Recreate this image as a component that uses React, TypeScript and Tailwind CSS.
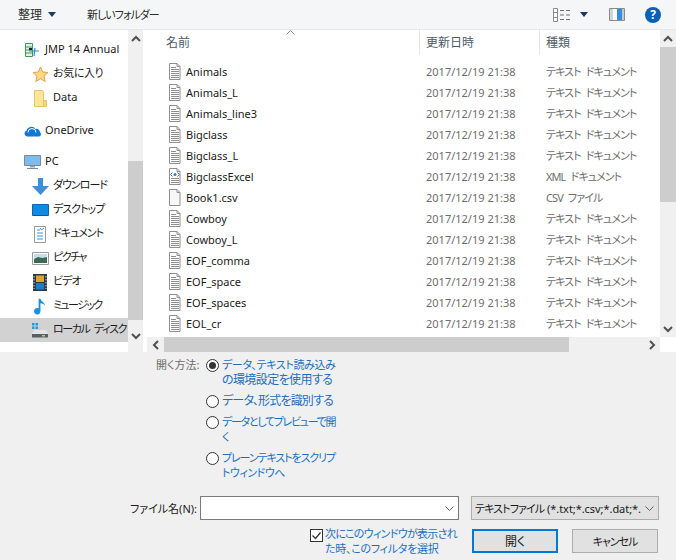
import type { ReactNode } from 'react'

const fontClass =
  "font-['Noto_Sans','Noto_Sans_CJK_JP',sans-serif] [font-feature-settings:'palt'] text-[11px] leading-[15px]"

// かな主体の文字列は幅が狭いので詰める
const kana = 'tracking-[-0.9px] [word-spacing:3px]'
const kanaNav = 'tracking-[-1px]'

const TEXT_TYPE = 'テキスト ドキュメント'

const files = [
  { name: 'Animals', type: TEXT_TYPE, icon: 'text' },
  { name: 'Animals_L', type: TEXT_TYPE, icon: 'text' },
  { name: 'Animals_line3', type: TEXT_TYPE, icon: 'text' },
  { name: 'Bigclass', type: TEXT_TYPE, icon: 'text' },
  { name: 'Bigclass_L', type: TEXT_TYPE, icon: 'text' },
  { name: 'BigclassExcel', type: 'XML ドキュメント', icon: 'xml' },
  { name: 'Book1.csv', type: 'CSV ファイル', icon: 'blank' },
  { name: 'Cowboy', type: TEXT_TYPE, icon: 'text' },
  { name: 'Cowboy_L', type: TEXT_TYPE, icon: 'text' },
  { name: 'EOF_comma', type: TEXT_TYPE, icon: 'text' },
  { name: 'EOF_space', type: TEXT_TYPE, icon: 'text' },
  { name: 'EOF_spaces', type: TEXT_TYPE, icon: 'text' },
  { name: 'EOL_cr', type: TEXT_TYPE, icon: 'text' },
]

function FileIcon({ kind }: { kind: string }) {
  return (
    <svg width="14" height="17" viewBox="0 0 14 17" className="shrink-0">
      <path d="M1.500.5h7.500l3 3v13h-10.500z" fill={kind === 'blank' ? '#f7f7f7' : '#fff'} stroke="#8e8e8e" />
      <path d="M9 .5v3h3" fill="none" stroke="#8e8e8e" />
      {kind === 'text' && (
        <path d="M3 4.500h5M3 6.500h8M3 8.500h8M3 10.500h8M3 12.500h8M3 14.500h8" stroke="#8e8e8e" />
      )}
      {kind === 'xml' && (
        <>
          <path d="M3 10.500h8M3 12.500h8M3 14.500h8" stroke="#8e8e8e" />
          <path d="M4.500 4.500l-2 2 2 2M9.500 4.500l2 2-2 2" fill="none" stroke="#5b6b7b" />
          <circle cx="7" cy="6.500" r="1.500" fill="#2f7fd0" />
        </>
      )}
    </svg>
  )
}

function Chevron({ dir, className = '' }: { dir: 'up' | 'down' | 'left' | 'right'; className?: string }) {
  const d = {
    up: 'M1 6l4-4 4 4',
    down: 'M1 2l4 4 4-4',
    left: 'M6 1L2 5l4 4',
    right: 'M2 1l4 4-4 4',
  }[dir]
  const box = dir === 'up' || dir === 'down' ? '0 0 10 8' : '0 0 8 10'
  return (
    <svg
      width={dir === 'up' || dir === 'down' ? 10 : 8}
      height={dir === 'up' || dir === 'down' ? 8 : 10}
      viewBox={box}
      className={className}
    >
      <path d={d} fill="none" stroke="#505050" strokeWidth="2" />
    </svg>
  )
}

function Caret() {
  return (
    <svg width="8" height="5" viewBox="0 0 8 5">
      <path d="M0 0h8L4 5z" fill="#1f3a5f" />
    </svg>
  )
}

function ComboArrow() {
  return (
    <svg width="9" height="5" viewBox="0 0 9 5" className="shrink-0">
      <path d="M.5.500l4 4 4-4" fill="none" stroke="#606060" />
    </svg>
  )
}

const navIcons: Record<string, ReactNode> = {
  jmp: (
    <svg width="17" height="17" viewBox="0 0 17 17">
      <path d="M1.500 1.500h7v13h-7z" fill="#e4f3e4" stroke="#3c9a4c" />
      <path d="M1.500 5h7M1.500 8h7M1.500 11h7" stroke="#3c9a4c" />
      <path d="M5 9h10M11 6l-1 8" stroke="#2b86d6" strokeWidth="1.200" />
      <rect x="5" y="6" width="3" height="2" fill="#222" />
    </svg>
  ),
  star: (
    <svg width="17" height="17" viewBox="0 0 17 17">
      <path
        d="M8.500 1l2.200 5 5.300.5-4 3.600 1.200 5.400-4.700-2.800-4.700 2.800 1.200-5.400-4-3.600 5.300-.5z"
        fill="#fbd884"
        stroke="#e8a04c"
      />
    </svg>
  ),
  folder: (
    <svg width="13" height="17" viewBox="0 0 13 17" className="ml-[2px]">
      <path d="M.5.5h8l1 1v15h-9z" fill="#fde59c" stroke="#e8c468" />
      <path d="M9.500 10.500h3v6h-3z" fill="#f7d679" stroke="#e8c468" />
    </svg>
  ),
  cloud: (
    <svg width="17" height="12" viewBox="0 0 17 12">
      <path d="M3 11.500a3 3 0 0 1-.5-5.800A5 5 0 0 1 11.500 4a3.500 3.500 0 0 1 4.500 3.200 2.400 2.400 0 0 1-1 4.300z" fill="#0f78d4" />
      <path d="M4 7.500a4 4 0 0 1 8 0" fill="none" stroke="#fff" />
    </svg>
  ),
  pc: (
    <svg width="17" height="16" viewBox="0 0 17 16">
      <path d="M.5 1.500h16v10H.5z" fill="#7fbcec" stroke="#7a8a99" />
      <path d="M6 12h5v1.500H6z" fill="#9aa5ae" />
      <path d="M3 14.500h11" stroke="#7a8a99" />
    </svg>
  ),
  download: (
    <svg width="17" height="17" viewBox="0 0 17 17">
      <path d="M6 0h5v8h6l-8.500 9L0 8h6z" fill="#3d8fdc" />
    </svg>
  ),
  desktop: (
    <svg width="17" height="14" viewBox="0 0 17 14">
      <path d="M.5 1.500h16v11H.5z" fill="#0f8be6" stroke="#1166a8" />
      <path d="M1 12h15v1H1z" fill="#0d5a98" />
    </svg>
  ),
  docs: (
    <svg width="12" height="17" viewBox="0 0 12 17" className="ml-[2px]">
      <path d="M.5.5h11v16H.5z" fill="#fff" stroke="#9a9a9a" />
      <path d="M3 4h3M3 7h6M3 10h6M3 13h6" stroke="#3c8fd8" />
      <path d="M6 2l1.500 2 2.500-2" fill="none" stroke="#3c8fd8" />
    </svg>
  ),
  pictures: (
    <svg width="17" height="13" viewBox="0 0 17 13">
      <path d="M.5.5h16v12H.5z" fill="#fff" stroke="#9a9a9a" />
      <path d="M2 2h13v5H2z" fill="#c4deee" />
      <path d="M2 7l4-2 4 1 5-1v6H2z" fill="#3d6a57" />
    </svg>
  ),
  video: (
    <svg width="14" height="17" viewBox="0 0 14 17" className="ml-[1px]">
      <path d="M0 0h14v17H0z" fill="#2c3a44" />
      <path d="M3 1.500h8v6.500H3z" fill="#e0a52f" />
      <path d="M3 9h8v6.500H3z" fill="#1f7bc9" />
      <path d="M1 2v13M13 2v13" stroke="#c8d0d6" strokeDasharray="1.500 1.500" />
    </svg>
  ),
  music: (
    <svg width="12" height="17" viewBox="0 0 13 17" className="ml-[2px]">
      <path d="M5 0h2c.5 3 5 4 5 8-1-2-3-2.500-5-3v8.500a3.500 3.500 0 1 1-2-3z" fill="#1b8fe6" />
    </svg>
  ),
  disk: (
    <svg width="16" height="15" viewBox="0 0 16 15">
      <path d="M0 0h2.500v2.500H0zM3.500 0H6v2.500H3.500zM0 3.500h2.500V6H0zM3.500 3.500H6V6H3.500z" fill="#1f9ae8" />
      <path d="M2 7h12l2 4H0z" fill="#e4e4e4" />
      <path d="M0 11h16v3.500H0z" fill="#5a5f62" />
      <path d="M10 12h3v1.500h-3z" fill="#8fe08f" />
    </svg>
  ),
}

function NavRow({
  icon,
  label,
  sub,
  selected,
  className = '',
  textClass = '',
}: {
  icon: string
  label: string
  sub?: boolean
  selected?: boolean
  className?: string
  textClass?: string
}) {
  return (
    <div
      className={`flex h-6 items-center whitespace-nowrap ${selected ? 'bg-[#d2d2d2]' : ''} ${
        sub ? 'pl-8' : 'pl-6'
      } ${className}`}
    >
      <span className="flex w-[21px] shrink-0 items-center">{navIcons[icon]}</span>
      <span className={`mb-[3px] text-[#1a1a1a] ${textClass}`}>{label}</span>
    </div>
  )
}

function Radio({
  checked,
  lines,
  className = '',
}: {
  checked?: boolean
  lines: { text: string; cls: string }[]
  className?: string
}) {
  return (
    <div className={`flex ${className}`}>
      <span className="mt-[1px] flex h-[13px] w-[13px] shrink-0 items-center justify-center rounded-full border border-[#333] bg-white">
        {checked && <span className="h-[7px] w-[7px] rounded-full bg-[#333]" />}
      </span>
      <span className="-mt-[1px] mb-[1px] ml-[3px] whitespace-nowrap text-[#1a6fc4]">
        {lines.map((l) => (
          <div key={l.text} className={l.cls}>
            {l.text}
          </div>
        ))}
      </span>
    </div>
  )
}

export default function App() {
  return (
    <div className={`flex h-[560px] w-[676px] flex-col overflow-hidden bg-[#f0f0f0] ${fontClass}`}>
      {/* ツールバー */}
      <div className="flex h-[30px] shrink-0 items-center border-b border-[#e6e7e8] bg-[#f5f6f7] pl-[18px] text-[#2b2b2b]">
        <span className="text-[12px]">整理</span>
        <span className="ml-[6px] flex"><Caret /></span>
        <span className={`ml-[31px] ${kanaNav}`}>新しいフォルダー</span>
        <div className="ml-auto flex items-center">
          <svg width="17" height="14" viewBox="0 0 17 14">
            <path d="M.5.5h4v13h-4z" fill="#fff" stroke="#8a8a8a" />
            <path d="M1 4.500h3M1 9.500h3" stroke="#8a8a8a" />
            <path d="M7 2.500h4M13 2.500h4M7 7h4M13 7h4M7 11.500h4M13 11.500h4" stroke="#6f6f6f" />
          </svg>
          <span className="ml-[10px] flex"><Caret /></span>
          <svg width="16" height="13" viewBox="0 0 16 13" className="ml-[21px]">
            <path d="M.5.500h15v12H.5z" fill="#fff" stroke="#8a8a8a" />
            <path d="M1 1h3v11H1z" fill="#d4d4d4" />
            <path d="M8 1h5v11H8z" fill="#2f8fe0" />
            <path d="M13 1h2v11h-2z" fill="#c8c8c8" />
          </svg>
          <span className="ml-5 mr-[15px] flex h-4 w-4 items-center justify-center rounded-full bg-[#0a60b5] text-[12px] font-bold text-white">
            ?
          </span>
        </div>
      </div>

      {/* 本体 */}
      <div className="flex h-[322px] shrink-0 bg-white">
        <div className="flex w-[128px] shrink-0 flex-col overflow-hidden pt-[8px]">
          <NavRow icon="jmp" label="JMP 14 Annual" />
          <NavRow icon="star" label="お気に入り" sub textClass="tracking-[-0.4px]" />
          <NavRow icon="folder" label="Data" sub />
          <NavRow icon="cloud" label="OneDrive" className="mt-[9px]" />
          <NavRow icon="pc" label="PC" className="mt-[7px]" />
          <NavRow icon="download" label="ダウンロード" sub textClass={kanaNav} />
          <NavRow icon="desktop" label="デスクトップ" sub textClass={kanaNav} />
          <NavRow icon="docs" label="ドキュメント" sub textClass={kanaNav} />
          <NavRow icon="pictures" label="ピクチャ" sub textClass="tracking-[-1.500px]" />
          <NavRow icon="video" label="ビデオ" sub textClass={kanaNav} />
          <NavRow icon="music" label="ミュージック" sub textClass="tracking-[-1.600px]" />
          <NavRow icon="disk" label="ローカル ディスク" sub selected textClass="tracking-[-1.400px] [word-spacing:3px]" />
        </div>
        <div className="flex w-[15px] shrink-0 flex-col bg-[#f0f0f0]">
          <div className="flex h-[17px] items-center justify-center"><Chevron dir="up" /></div>
          <div className="mt-[114px] h-[159px] bg-[#cdcdcd]" />
          <div className="flex flex-1 items-center justify-center"><Chevron dir="down" /></div>
        </div>

        <div className="ml-[4px] flex w-[529px] flex-col">
          <div className="flex h-[307px]">
            <div className="flex w-[513px] flex-col overflow-hidden">
              <div className="relative grid h-[25px] shrink-0 grid-cols-[272px_120px_1fr] text-[12px] text-[#4d5a66]">
                <div className="flex items-center pl-[19px]">名前</div>
                <div className="flex items-center border-l border-[#e5e5e5] pl-[6px]">更新日時</div>
                <div className="flex items-center border-l border-[#e5e5e5] pl-[6px]">種類</div>
                <svg width="9" height="5" viewBox="0 0 9 5" className="absolute left-[139px] top-[0px]">
                  <path d="M.5 4.500l4-4 4 4" fill="none" stroke="#8a8a8a" />
                </svg>
              </div>
              <div className="pt-[6px]">
                {files.map((f) => (
                  <div key={f.name} className="grid h-[21px] grid-cols-[272px_120px_1fr] items-center">
                    <div className="flex items-center pl-[21px] text-[#1a1a1a]">
                      <FileIcon kind={f.icon} />
                      <span className="ml-[4px]">{f.name}</span>
                    </div>
                    <div className="pl-[7px] text-[#6d6d6d]">2017/12/19 21:38</div>
                    <div className={`whitespace-nowrap pl-[7px] text-[#6d6d6d] ${kana}`}>{f.type}</div>
                  </div>
                ))}
              </div>
            </div>
            <div className="flex w-[16px] flex-col bg-[#f0f0f0]">
              <div className="flex h-[17px] items-center justify-center"><Chevron dir="up" /></div>
              <div className="h-[155px] bg-[#cdcdcd]" />
              <div className="mt-auto flex h-[17px] items-center justify-center"><Chevron dir="down" /></div>
            </div>
          </div>
          <div className="flex h-[15px]">
            <div className="flex w-[513px] bg-[#f0f0f0]">
              <div className="flex w-[17px] items-center justify-center"><Chevron dir="left" /></div>
              <div className="w-[405px] bg-[#cdcdcd]" />
              <div className="ml-auto flex w-[17px] items-center justify-center"><Chevron dir="right" /></div>
            </div>
          </div>
        </div>
      </div>

      {/* 開く方法 */}
      <div className="flex pl-[156px] pt-[6px]">
        <span className="-mt-[1px] w-[50px] text-[#6d6d6d]">開く方法:</span>
        <div className="flex flex-col">
          <Radio
            checked
            lines={[
              { text: 'データ、テキスト読み込み', cls: 'tracking-[-0.35px]' },
              { text: 'の環境設定を使用する', cls: 'text-[12px] tracking-[-0.6px]' },
            ]}
          />
          <Radio lines={[{ text: 'データ、形式を識別する', cls: 'text-[12px] tracking-[-0.8px]' }]} className="mt-[6px]" />
          <Radio
            lines={[
              { text: 'データとしてプレビューで開', cls: 'tracking-[-1.300px]' },
              { text: 'く', cls: '' },
            ]}
            className="mt-[6px]"
          />
          <Radio
            lines={[
              { text: 'プレーンテキストをスクリプ', cls: 'tracking-[-1.100px]' },
              { text: 'トウィンドウへ', cls: 'tracking-[-0.5px]' },
            ]}
            className="mt-[6px]"
          />
        </div>
      </div>

      {/* ファイル名 */}
      <div className="mt-[15px] flex h-[24px] items-center">
        <span className="ml-[130px] w-[70px] whitespace-nowrap text-[#1a1a1a]">ファイル名(N):</span>
        <div className="flex h-[24px] w-[259px] items-center justify-end border border-[#7a7a7a] bg-white pr-[4px]">
          <ComboArrow />
        </div>
        <div className="ml-[12px] flex h-[24px] w-[188px] items-center justify-between overflow-hidden border border-[#adadad] bg-[#e1e1e1] pl-[3px] pr-[4px] whitespace-nowrap text-[#1a1a1a]">
          <span className="tracking-[-0.05px]"><span className="tracking-[-0.9px]">テキストファイル</span> (*.txt;*.csv;*.dat;*.</span>
          <ComboArrow />
        </div>
      </div>

      {/* フィルタとボタン */}
      <div className="mt-[7px] flex">
        <div className="ml-[310px] flex w-[162px]">
          <span className="mt-[2px] flex h-[13px] w-[13px] shrink-0 items-center justify-center border border-[#333] bg-white">
            <svg width="11" height="11" viewBox="0 0 11 11"><path d="M1.500 5.500l3 3 5-6" fill="none" stroke="#333" strokeWidth="1.300" /></svg>
          </span>
          <span className="-mt-[1px] ml-[2px] whitespace-nowrap text-[#1a6fc4]">
            <div className="tracking-[-0.7px]">次にこのウィンドウが表示され</div>
            <div className="tracking-[-0.25px]">た時、このフィルタを選択</div>
          </span>
        </div>
        <button className="mt-[2px] h-[24px] w-[86px] border-2 border-[#0078d7] bg-[#e1e1e1] text-[12px] text-[#1a1a1a]">開く</button>
        <button className={`ml-[14px] mt-[2px] h-[24px] w-[86px] border border-[#adadad] bg-[#e1e1e1] text-[#1a1a1a] ${kanaNav}`}>キャンセル</button>
      </div>
    </div>
  )
}
